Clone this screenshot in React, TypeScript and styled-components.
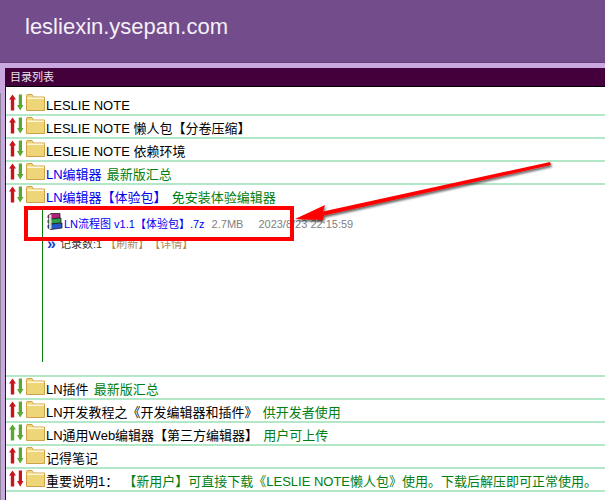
import styled, { createGlobalStyle } from "styled-components";

const GlobalStyle = createGlobalStyle`
  html, body {
    margin: 0;
    padding: 0;
    background: #ffffff;
    overflow: hidden;
  }
  body {
    font-family: "Liberation Sans", "Noto Sans CJK SC", sans-serif;
  }
`;

const Page = styled.div`
  position: relative;
  width: 605px;
  height: 500px;
  overflow: hidden;
  background: #c9a8e0;
  &::after {
    content: "";
    position: absolute;
    left: 0;
    top: 93px;
    bottom: 0;
    width: 1px;
    background: #8f8398;
  }
`;

const Header = styled.header`
  height: 63px;
  box-sizing: border-box;
  padding: 14px 0 0 25px;
  background: #734c8b;
  border-bottom: 1px solid #66407c;
  color: #f4f0f8;
  font-size: 22px;
  line-height: 26px;
`;

const Panel = styled.section`
  margin: 5px 0 0 5px;
  height: 432px;
  background: #ffffff;
  border-left: 1px solid #43003a;
`;

const PanelTitle = styled.div`
  height: 18px;
  box-sizing: border-box;
  padding-left: 4px;
  background: #43003a;
  color: #e8e0e8;
  font-size: 11px;
  line-height: 19px;
`;

const List = styled.div`
  border-top: 1px solid #000000;
`;

const Row = styled.div<{ $first?: boolean; $open?: boolean }>`
  display: flex;
  align-items: flex-start;
  box-sizing: border-box;
  height: ${({ $first, $open }) => ($first ? 29 : $open ? 21 : 23)}px;
  padding-top: ${({ $first }) => ($first ? 7 : 1)}px;
  border-bottom: ${({ $open }) => ($open ? "none" : "2px solid #b2e8c8")};
`;

const Arrows = styled.svg`
  width: 15px;
  height: 17px;
  margin-left: 3px;
  flex: none;
`;

const Folder = styled.svg`
  width: 19px;
  height: 17px;
  margin-left: 2px;
  flex: none;
`;

const Name = styled.span<{ $link?: boolean }>`
  margin: 4px 0 0 1px;
  font-size: 13px;
  line-height: 16px;
  white-space: pre;
  color: ${({ $link }) => ($link ? "#0000f0" : "#000000")};
`;

const Note = styled.span`
  margin: 4px 0 0 5px;
  font-size: 13px;
  line-height: 16px;
  white-space: pre;
  color: #008012;
`;

const Expanded = styled.div`
  height: 171px;
  box-sizing: border-box;
  border-bottom: 2px solid #b2e8c8;
  padding: 2px 0 0 36px;
`;

const Branch = styled.div`
  height: 149px;
  padding: 5px 0 0 4px;
  border-left: 1px solid #0a7a0a;
`;

const FileRow = styled.div`
  display: flex;
  align-items: flex-start;
  height: 24px;
  font-size: 11px;
  line-height: 14px;
  white-space: pre;
`;

const FileIcon = styled.svg`
  width: 16px;
  height: 17px;
  flex: none;
  margin-right: 1px;
`;

const FileLink = styled.span`
  margin-top: 4px;
  color: #0000f0;
`;

const FileMeta = styled.span<{ $gap: number }>`
  margin: 4px 0 0 ${({ $gap }) => $gap}px;
  color: #808080;
`;

const CountRow = styled.div`
  display: flex;
  align-items: center;
  font-size: 11px;
  line-height: 14px;
  white-space: pre;
  color: #333333;
`;

const Chevrons = styled.span`
  color: #1a3fd0;
  font-size: 16px;
  font-weight: bold;
  margin-right: 4px;
`;

const Action = styled.span`
  color: #b08a50;
`;

const Highlight = styled.div`
  position: absolute;
  left: 24px;
  top: 206px;
  width: 270px;
  height: 35px;
  box-sizing: border-box;
  border: 4px solid #ff0000;
`;

const Pointer = styled.svg`
  position: absolute;
  left: 0;
  top: 0;
  width: 605px;
  height: 500px;
  pointer-events: none;
`;

type ArrowColor = "red" | "green";
const arrowColors: Record<ArrowColor, string> = { red: "#c8141c", green: "#5aa832" };

function SortArrows({ up, down }: { up: ArrowColor; down: ArrowColor }) {
  return (
    <Arrows viewBox="0 0 15 17">
      <path d="M3.5 0.5 L7 5.5 L5.2 5.5 L5.2 16.5 L1.8 16.5 L1.8 5.5 L0 5.5 Z" fill={arrowColors[up]} />
      <path d="M9.8 0.5 L13 0.5 L13 11 L14.5 11 L11.2 16.5 L8 11 L9.8 11 Z" fill={arrowColors[down]} />
    </Arrows>
  );
}

function FolderIcon() {
  return (
    <Folder viewBox="0 0 19 17">
      <path d="M0.5 1.5 L0.5 16.5 L18.5 16.5 L18.5 3 L7.5 3 L6 0.5 L1 0.5 Z" fill="#eed678" stroke="#cfa24a" />
      <path d="M1 3.5 L18 3.5 L18 5 L1 5 Z" fill="#fff6d8" />
    </Folder>
  );
}

function ArchiveIcon() {
  return (
    <FileIcon viewBox="0 0 16 17">
      <path d="M1 2.5 L4 0.5 L13 0.5 L13 5 L4 6 L1 5 Z" fill="#b0207a" stroke="#222" strokeWidth="0.8" />
      <path d="M1 7 L4 6 L14 5 L14 10 L4 11 L1 10 Z" fill="#2e9e48" stroke="#222" strokeWidth="0.8" />
      <path d="M1 12 L4 11 L15 10 L15 15 L4 16.5 L1 15 Z" fill="#2458c8" stroke="#222" strokeWidth="0.8" />
      <rect x="2" y="1.5" width="2.5" height="14.5" fill="#d8d8d0" />
    </FileIcon>
  );
}

const rowsTop: { name: string; note?: string; link?: boolean }[] = [
  { name: "LESLIE NOTE" },
  { name: "LESLIE NOTE 懒人包【分卷压缩】" },
  { name: "LESLIE NOTE 依赖环境" },
  { name: "LN编辑器", note: "最新版汇总", link: true },
];

const rowsBottom: { name: string; note?: string; up: ArrowColor; down: ArrowColor }[] = [
  { name: "LN插件", note: "最新版汇总", up: "red", down: "green" },
  { name: "LN开发教程之《开发编辑器和插件》", note: "供开发者使用", up: "red", down: "green" },
  { name: "LN通用Web编辑器【第三方编辑器】", note: "用户可上传", up: "green", down: "green" },
  { name: "记得笔记", up: "red", down: "green" },
  {
    name: "重要说明1：",
    note: "【新用户】可直接下载《LESLIE NOTE懒人包》使用。下载后解压即可正常使用。",
    up: "red",
    down: "red",
  },
];

export default function App() {
  return (
    <Page>
      <GlobalStyle />
      <Header>lesliexin.ysepan.com</Header>
      <Panel>
        <PanelTitle>目录列表</PanelTitle>
        <List>
          {rowsTop.map((row, i) => (
            <Row key={row.name} $first={i === 0}>
              <SortArrows up="red" down="green" />
              <FolderIcon />
              <Name $link={row.link}>{row.name}</Name>
              {row.note && <Note>{row.note}</Note>}
            </Row>
          ))}
          <Row $open>
            <SortArrows up="red" down="green" />
            <FolderIcon />
            <Name $link>LN编辑器【体验包】</Name>
            <Note>免安装体验编辑器</Note>
          </Row>
          <Expanded>
            <Branch>
              <FileRow>
                <ArchiveIcon />
                <FileLink>LN流程图 v1.1【体验包】.7z</FileLink>
                <FileMeta $gap={7}>2.7MB</FileMeta>
                <FileMeta $gap={15}>2023/8/23 22:15:59</FileMeta>
              </FileRow>
              <CountRow>
                <Chevrons>»</Chevrons>
                记录数:1 <Action>【刷新】</Action> <Action>【详情】</Action>
              </CountRow>
            </Branch>
          </Expanded>
          {rowsBottom.map((row) => (
            <Row key={row.name}>
              <SortArrows up={row.up} down={row.down} />
              <FolderIcon />
              <Name>{row.name}</Name>
              {row.note && <Note>{row.note}</Note>}
            </Row>
          ))}
        </List>
      </Panel>
      <Highlight />
      <Pointer viewBox="0 0 605 500">
        <defs>
          <filter id="arrow-shadow" x="-10%" y="-30%" width="120%" height="170%">
            <feDropShadow dx="1" dy="2" stdDeviation="1.2" floodColor="#000000" floodOpacity="0.6" />
          </filter>
        </defs>
        <path
          d="M295 219 L325 205 L323 211.5 L550 162 L551 165 L324 215.5 L323 220 Z"
          fill="#ff0000"
          filter="url(#arrow-shadow)"
        />
      </Pointer>
    </Page>
  );
}
